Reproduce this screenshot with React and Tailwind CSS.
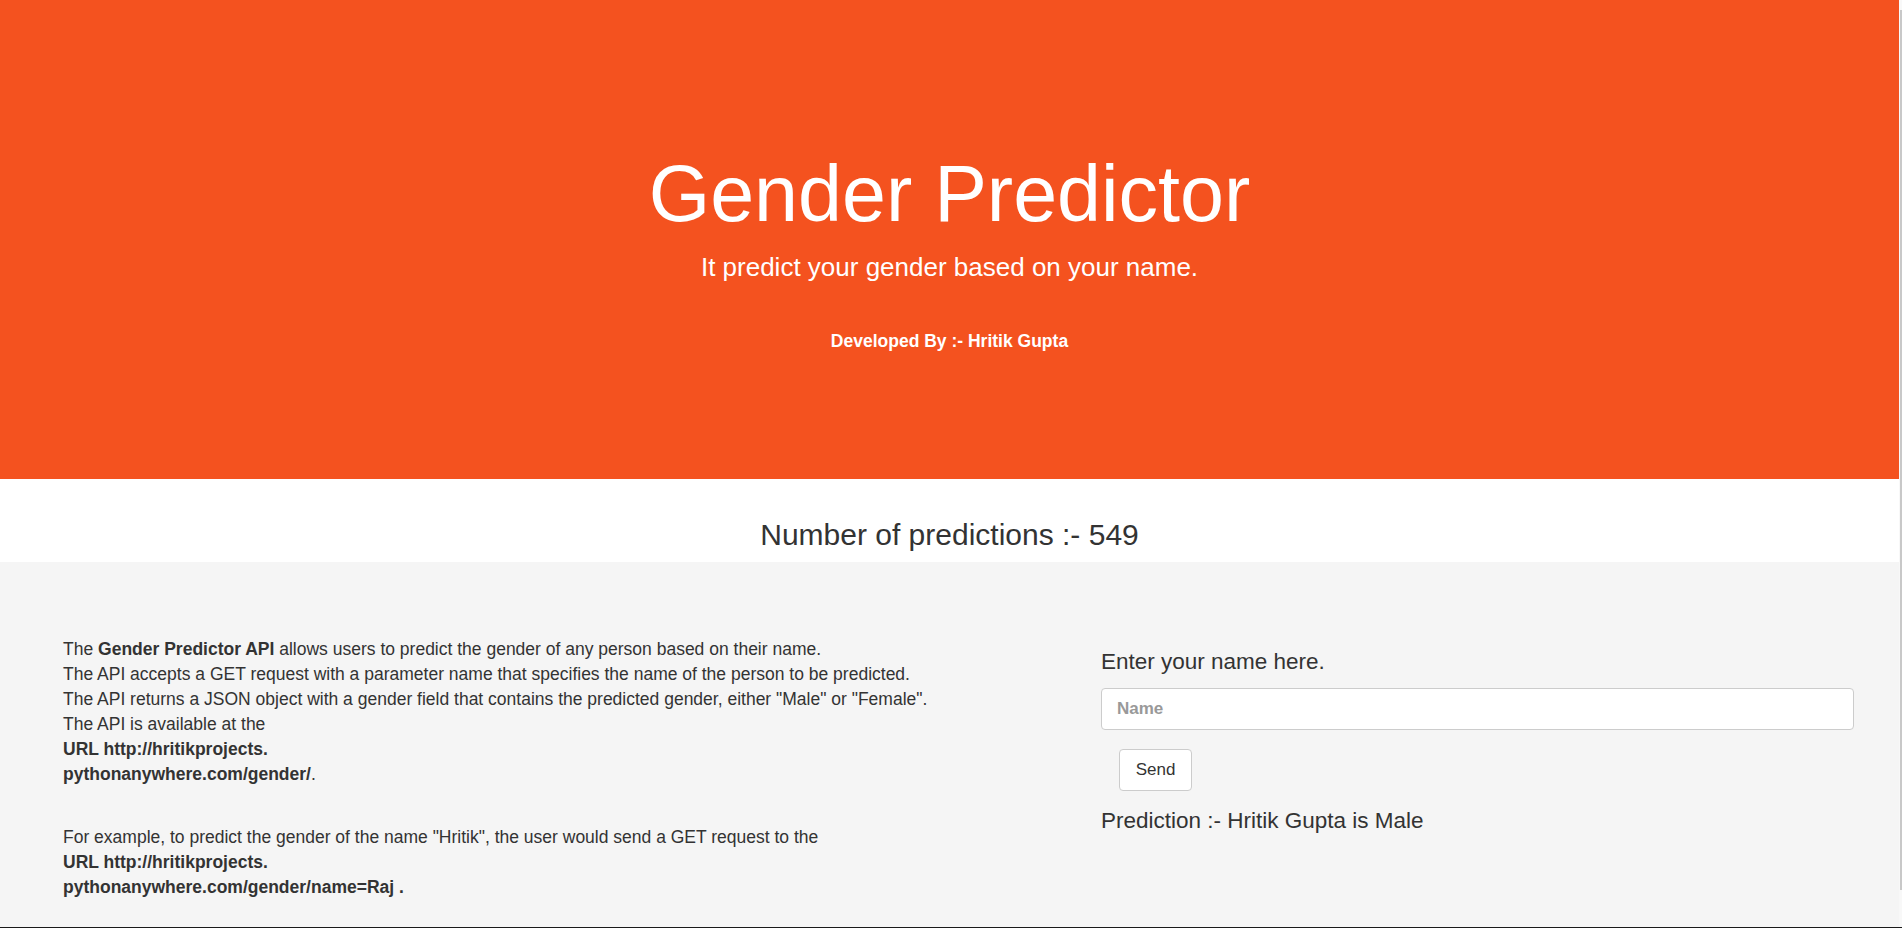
import React from "react";

export default function App() {
    return (
        <div className="w-[1902px] h-[928px] overflow-hidden font-['Liberation_Sans',Arial,sans-serif] text-[#333]">
            <div className="flex h-[927px]">
                <div className="w-[1899px] flex flex-col">
                    {/* Header */}
                    <header className="h-[479px] bg-[#f4521f] text-white flex flex-col items-center">
                        <h1 className="mt-[154px] text-[79px] leading-[80px]">Gender Predictor</h1>
                        <p className="mt-[20px] text-[26px] leading-[26px]">
                            It predict your gender based on your name.
                        </p>
                        <p className="mt-[53px] text-[17.5px] leading-[17px] font-bold">
                            Developed By :- Hritik Gupta
                        </p>
                    </header>

                    {/* Counter */}
                    <div className="h-[83px] bg-white flex justify-center pt-[41px]">
                        <h2 className="text-[30px] leading-[30px] text-[#333]">
                            Number of predictions :- 549
                        </h2>
                    </div>

                    {/* Body */}
                    <section className="flex-1 bg-[#f5f5f5] flex">
                        <div className="w-[1101px] pl-[63px] pt-[75px] text-[17.5px] leading-[25px]">
                            <p>
                                The <b>Gender Predictor API</b> allows users to predict the gender of any person based on their name.
                                <br />
                                The API accepts a GET request with a parameter name that specifies the name of the person to be predicted.
                                <br />
                                The API returns a JSON object with a gender field that contains the predicted gender, either "Male" or "Female".
                                <br />
                                The API is available at the
                                <br />
                                <b>URL http://hritikprojects.</b>
                                <br />
                                <b>pythonanywhere.com/gender/</b>.
                            </p>
                            <p className="mt-[38px]">
                                For example, to predict the gender of the name "Hritik", the user would send a GET request to the
                                <br />
                                <b>URL http://hritikprojects.</b>
                                <br />
                                <b>pythonanywhere.com/gender/name=Raj .</b>
                            </p>
                        </div>

                        <div className="w-[753px] pt-[89px]">
                            <h3 className="text-[22.5px] leading-[22px]">Enter your name here.</h3>
                            <input
                                placeholder="Name"
                                className="mt-[15px] block w-full h-[42px] bg-white border border-[#ccc] rounded-[4px] px-[15px] text-[17px] outline-none placeholder:font-bold placeholder:text-[#999]"
                            />
                            <button className="mt-[19px] ml-[18px] h-[42px] w-[73px] bg-white border border-[#ccc] rounded-[4px] text-[17px] text-[#333]">
                                Send
                            </button>
                            <p className="mt-[19px] text-[22.5px] leading-[22px]">
                                Prediction :- Hritik Gupta is Male
                            </p>
                        </div>
                    </section>
                </div>

                {/* Scrollbar strip */}
                <div className="w-[3px] bg-[#f8f8f8] flex justify-end pt-[10px]">
                    <div className="w-[2px] h-[880px] bg-[#c8c8c8]" />
                </div>
            </div>
            <div className="h-px bg-[#1a1a1a]" />
        </div>
    );
}
